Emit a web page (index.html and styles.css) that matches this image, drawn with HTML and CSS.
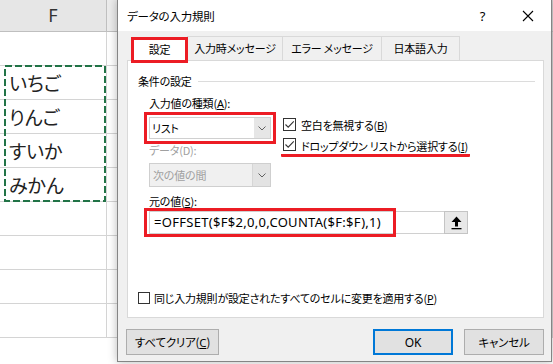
FILE: index.html
```html
<!DOCTYPE html>
<html lang="ja">
<head>
    <meta charset="UTF-8">
    <title>データの入力規則</title>
    <link rel="stylesheet" href="styles.css">
</head>
<body>
    <div class="sheet">
        <div class="sheet-row head">
            <div class="cell col-f">F</div>
            <div class="cell col-g"></div>
        </div>
        <div class="sheet-row"><div class="cell col-f"></div><div class="cell col-g"></div></div>
        <div class="sheet-row"><div class="cell col-f">いちご</div><div class="cell col-g"></div></div>
        <div class="sheet-row"><div class="cell col-f">りんご</div><div class="cell col-g"></div></div>
        <div class="sheet-row"><div class="cell col-f">すいか</div><div class="cell col-g"></div></div>
        <div class="sheet-row"><div class="cell col-f">みかん</div><div class="cell col-g"></div></div>
        <div class="sheet-row"><div class="cell col-f"></div><div class="cell col-g"></div></div>
        <div class="sheet-row"><div class="cell col-f"></div><div class="cell col-g"></div></div>
        <div class="sheet-row"><div class="cell col-f"></div><div class="cell col-g"></div></div>
        <div class="sheet-row"><div class="cell col-f"></div><div class="cell col-g"></div></div>
        <svg class="copy-ants" width="102" height="137" viewBox="0 0 102 137">
            <rect x="1" y="1" width="100" height="135" fill="none" stroke="#217346" stroke-width="2" stroke-dasharray="7 3"/>
        </svg>
    </div>

    <div class="dialog">
        <div class="titlebar">
            <span class="title">データの入力規則</span>
            <span class="help">?</span>
            <span class="close">
                <svg width="12" height="12" viewBox="0 0 12 12"><path d="M1 1 L11 11 M11 1 L1 11" stroke="#000" stroke-width="1.1"/></svg>
            </span>
        </div>
        <div class="dlg-body">
            <div class="tabs">
                <div class="tab active">設定</div>
                <div class="tab w1">入力時メッセージ</div>
                <div class="tab w2">エラー メッセージ</div>
                <div class="tab w3">日本語入力</div>
            </div>
            <div class="panel">
                <div class="group-head">
                    <span>条件の設定</span>
                    <span class="rule"></span>
                </div>
                <div class="group">
                    <div class="label">入力値の種類(<u>A</u>):</div>
                    <div class="kind-row">
                        <div class="left-col">
                            <div class="combo marked">
                                <span class="combo-text">リスト</span>
                                <span class="combo-btn">
                                    <svg width="8" height="5" viewBox="0 0 8 5"><path d="M0.5 0.5 L4 4 L7.5 0.5" fill="none" stroke="#606060"/></svg>
                                </span>
                            </div>
                            <div class="label muted data-label">データ(D):</div>
                            <div class="combo disabled">
                                <span class="combo-text">次の値の間</span>
                                <span class="combo-btn">
                                    <svg width="8" height="5" viewBox="0 0 8 5"><path d="M0.5 0.5 L4 4 L7.5 0.5" fill="none" stroke="#606060"/></svg>
                                </span>
                            </div>
                        </div>
                        <div class="checks">
                            <div class="check-row">
                                <span class="box checked">
                                    <svg width="11" height="11" viewBox="0 0 11 11"><path d="M1.5 5.5 L4.2 8.2 L9.8 2.4" fill="none" stroke="#333" stroke-width="1.1"/></svg>
                                </span>
                                <span>空白を無視する(<u>B</u>)</span>
                            </div>
                            <div class="check-row underlined">
                                <span class="box checked">
                                    <svg width="11" height="11" viewBox="0 0 11 11"><path d="M1.5 5.5 L4.2 8.2 L9.8 2.4" fill="none" stroke="#333" stroke-width="1.1"/></svg>
                                </span>
                                <span>ドロップダウン リストから選択する(<u>I</u>)</span>
                            </div>
                        </div>
                    </div>
                    <div class="label source-label">元の値(<u>S</u>):</div>
                    <div class="source">
                        <div class="source-input">
                            <span class="formula">=OFFSET($F$2,0,0,COUNTA($F:$F),1)</span>
                        </div>
                        <span class="ref-btn">
                            <svg width="11" height="14" viewBox="0 0 11 14"><path d="M5.5 0.5 L10.5 6 L7 6 L7 10.5 L4 10.5 L4 6 L0.5 6 Z" fill="#000"/><rect x="0.5" y="12" width="10" height="1.3" fill="#000"/></svg>
                        </span>
                    </div>
                </div>
                <div class="apply-row">
                    <span class="box"></span>
                    <span>同じ入力規則が設定されたすべてのセルに変更を適用する(<u>P</u>)</span>
                </div>
            </div>
            <div class="buttons">
                <button class="btn clear">すべてクリア(<u>C</u>)</button>
                <span class="spacer"></span>
                <button class="btn ok">OK</button>
                <button class="btn">キャンセル</button>
            </div>
        </div>
    </div>
</body>
</html>
```

FILE: styles.css
```css
body {
    margin: 0;
    width: 553px;
    height: 364px;
    overflow: hidden;
    background: #fff;
    font-family: "Noto Sans CJK JP", "Noto Sans", sans-serif;
    position: relative;
}
.sheet {
    position: relative;
}
.sheet-row {
    display: flex;
    height: 34px;
    border-bottom: 1px solid #d4d4d4;
    box-sizing: border-box;
}
.sheet-row.head {
    height: 32px;
    background: #e6e6e6;
    border-bottom: 1px solid #bfbfbf;
}
.cell {
    box-sizing: border-box;
    border-right: 1px solid #d4d4d4;
}
.col-f {
    width: 107px;
    padding-left: 9px;
    font-size: 19px;
    line-height: 33px;
    color: #222;
    font-feature-settings: "palt";
}
.col-g {
    flex: 1;
}
.head .col-f {
    padding-left: 0;
    text-align: center;
    font-family: "Noto Sans", sans-serif;
    font-size: 18px;
    line-height: 30px;
    color: #333;
    border-right: 1px solid #bfbfbf;
}
.head .col-g {
    background: #ececec;
}
.copy-ants {
    position: absolute;
    left: 4px;
    top: 65px;
}

.dialog {
    position: absolute;
    left: 117px;
    top: -1px;
    width: 435px;
    height: 363px;
    box-sizing: border-box;
    border: 1px solid #858585;
    background: #f0f0f0;
    box-shadow: 0 0 9px rgba(0, 0, 0, 0.28);
    font-size: 11px;
    letter-spacing: -0.2px;
    color: #000;
    font-feature-settings: "palt";
    display: flex;
    flex-direction: column;
}
.titlebar {
    height: 31px;
    background: #fff;
    display: flex;
    align-items: center;
    padding-left: 9px;
}
.title {
    flex: 1;
    font-size: 11.5px;
}
.help {
    width: 45px;
    font-family: "Noto Sans", sans-serif;
    font-size: 13px;
    text-align: center;
}
.close {
    width: 46px;
    display: flex;
    justify-content: center;
}
.dlg-body {
    flex: 1;
    padding: 5px 7px 0 9px;
    display: flex;
    flex-direction: column;
}
.tabs {
    display: flex;
    align-items: flex-start;
    padding-left: 4px;
    height: 24px;
}
.tab {
    height: 24px;
    box-sizing: border-box;
    border: 1px solid #d9d9d9;
    border-bottom: none;
    margin-left: -1px;
    text-align: center;
    line-height: 23px;
    background: #f0f0f0;
}
.tab.active {
    width: 57px;
    height: 26px;
    margin: 1px 0 0 0;
    border: 3px solid #ec1c24;
    background: #fff;
    line-height: 19px;
    position: relative;
    z-index: 1;
}
.tab.w1 { width: 96px; }
.tab.w2 { width: 100px; }
.tab.w3 { width: 79px; }
.panel {
    height: 258px;
    box-sizing: border-box;
    background: #fff;
    border: 1px solid #d9d9d9;
    padding: 12px 8px 0 10px;
    display: flex;
    flex-direction: column;
}
.group-head {
    display: flex;
    align-items: center;
    height: 16px;
}
.group-head .rule {
    flex: 1;
    border-top: 1px solid #dcdcdc;
    margin-left: 6px;
}
.group {
    padding-left: 11px;
}
.label {
    height: 16px;
    line-height: 16px;
    margin-top: 6px;
}
.label u, .check-row u, .apply-row u, .btn u {
    font-family: "Noto Sans", sans-serif;
}
.muted {
    color: #a0a0a0;
}
.kind-row {
    display: flex;
    align-items: flex-start;
    margin-top: 3px;
}
.left-col {
    width: 122px;
    margin-top: 3px;
}
.combo {
    height: 22px;
    box-sizing: border-box;
    border: 1px solid #d0d0d0;
    display: flex;
    background: #fff;
}
.combo.marked {
    outline: 3px solid #ec1c24;
    outline-offset: 2px;
}
.combo-text {
    flex: 1;
    padding-left: 2px;
    line-height: 20px;
}
.combo-btn {
    width: 16px;
    background: #e6e6e6;
    display: flex;
    align-items: center;
    justify-content: center;
}
.combo.disabled {
    height: 24px;
    margin-top: 5px;
    background: #f0f0f0;
    border-color: #cfcfcf;
    color: #a0a0a0;
}
.combo.disabled .combo-text {
    line-height: 22px;
    padding-left: 3px;
}
.combo.disabled .combo-btn {
    width: 17px;
    border-left: 1px solid #d6d6d6;
    background: #e3e3e3;
}
.data-label {
    margin-top: 3px;
}
.checks {
    margin-left: 12px;
}
.check-row {
    display: flex;
    align-items: center;
    height: 21px;
}
.check-row.underlined {
    height: 22px;
    box-sizing: border-box;
    border-bottom: 3px solid #ec1c24;
    border-radius: 1px;
    margin-left: -2px;
    padding: 3px 2px 0 2px;
    align-items: flex-start;
}
.box {
    width: 13px;
    height: 13px;
    box-sizing: border-box;
    border: 1px solid #333;
    margin-right: 5px;
    display: flex;
    align-items: center;
    justify-content: center;
    background: #fff;
}
.source-label {
    margin-top: 6px;
}
.source {
    display: flex;
    margin-top: 2px;
    width: 319px;
}
.source-input {
    flex: 1;
    height: 23px;
    box-sizing: border-box;
    border: 1px solid #d0d0d0;
    border-right: none;
    display: flex;
}
.formula {
    margin: -1px 0 0 -3px;
    height: 23px;
    padding: 0 12px 0 7px;
    outline: 3px solid #ec1c24;
    font-family: "Noto Sans", sans-serif;
    font-size: 13px;
    line-height: 23px;
    letter-spacing: 0.3px;
}
.ref-btn {
    width: 24px;
    height: 23px;
    box-sizing: border-box;
    border: 1px solid #c4c4c4;
    background: #e8e8e8;
    display: flex;
    align-items: center;
    justify-content: center;
}
.apply-row {
    margin-top: auto;
    margin-bottom: 11px;
    display: flex;
    align-items: center;
    height: 16px;
}
.apply-row .box {
    width: 12px;
    height: 12px;
    margin-right: 4px;
}
.buttons {
    display: flex;
    margin-top: 11px;
    gap: 11px;
}
.spacer {
    flex: 1;
}
.btn {
    height: 26px;
    width: 80px;
    box-sizing: border-box;
    border: 1px solid #adadad;
    background: #e1e1e1;
    font-family: "Noto Sans CJK JP", "Noto Sans", sans-serif;
    font-feature-settings: "palt";
    font-size: 11.5px;
    letter-spacing: -0.2px;
    color: #000;
    padding: 0;
}
.btn.clear {
    width: 93px;
    margin-left: -1px;
}
.btn.ok {
    border: 1px solid #0078d7;
    box-shadow: inset 0 0 0 1px #0078d7;
    font-family: "Noto Sans", sans-serif;
    font-size: 12px;
}
```
